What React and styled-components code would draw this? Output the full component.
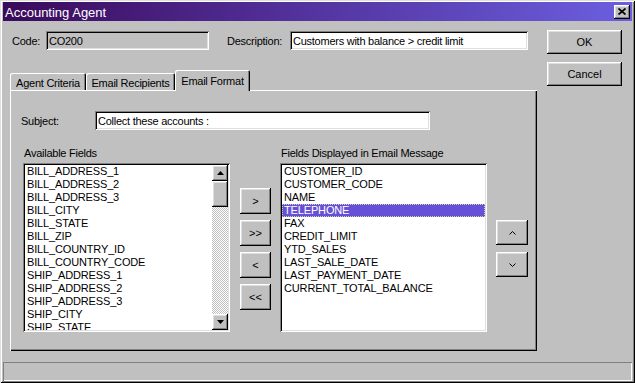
import React from "react";
import styled, { createGlobalStyle, css } from "styled-components";

const FONT = `"Liberation Sans", Arial, sans-serif`;

const Global = createGlobalStyle`
  html, body { margin: 0; padding: 0; background: #c0c0c0; }
  body { font-family: ${FONT}; font-size: 11px; color: #000; letter-spacing: -0.25px; }
  * { box-sizing: border-box; }
`;

const raised = css`
  box-shadow: inset -1px -1px #000, inset 1px 1px #fff, inset -2px -2px #808080,
    inset 2px 2px #dfdfdf;
`;
const sunken = css`
  box-shadow: inset 1px 1px #808080, inset -1px -1px #fff, inset 2px 2px #000,
    inset -2px -2px #dfdfdf;
`;

const Window = styled.div`
  width: 635px;
  height: 383px;
  background: #c0c0c0;
  display: flex;
  flex-direction: column;
  padding: 2px 3px;
  box-shadow: inset 1px 1px #dfdfdf, inset -1px -1px #000, inset 2px 2px #fff,
    inset -2px -2px #808080;
`;

const TitleBar = styled.div`
  flex: none;
  height: 19px;
  display: flex;
  align-items: center;
  justify-content: space-between;
  padding: 0 2px;
  background: linear-gradient(to right, #3a0a5a 0%, #52309a 45%, #6b5fe0 100%);
  color: #fff;
  font-size: 13px;
  letter-spacing: 0;
`;

const TitleText = styled.span`
  padding-top: 1px;
`;

const CloseButton = styled.div`
  width: 16px;
  height: 14px;
  background: #c0c0c0;
  ${raised};
  display: flex;
  align-items: center;
  justify-content: center;
`;

const Main = styled.div`
  flex: 1;
  display: flex;
  padding-left: 7px;
`;

const LeftCol = styled.div`
  width: 527px;
  display: flex;
  flex-direction: column;
`;

const RightCol = styled.div`
  width: 75px;
  margin-left: 10px;
  padding-top: 9px;
  display: flex;
  flex-direction: column;
  gap: 8px;
`;

const FieldRow = styled.div`
  margin-top: 10px;
  height: 19px;
  display: grid;
  grid-template-columns: 36px 163px 81px 238px;
  align-items: center;
`;

const Label = styled.span`
  padding-left: ${(p) => p.$indent || 0}px;
  white-space: nowrap;
`;

const TextField = styled.div`
  height: 19px;
  ${sunken};
  background: ${(p) => (p.$disabled ? "#c0c0c0" : "#fff")};
  padding: 0 3px;
  display: flex;
  align-items: center;
  white-space: nowrap;
  overflow: hidden;
`;

const PushButton = styled.div`
  width: ${(p) => (p.$w ? `${p.$w}px` : "100%")};
  height: ${(p) => p.$h}px;
  background: #c0c0c0;
  ${raised};
  display: flex;
  align-items: center;
  justify-content: center;
  letter-spacing: 0;
`;

const TabStrip = styled.div`
  margin-top: 20px;
  height: 20px;
  display: flex;
  align-items: flex-end;
  position: relative;
  z-index: 1;
`;

const Tab = styled.div`
  width: ${(p) => p.$w}px;
  height: ${(p) => (p.$active ? 21 : 17)}px;
  margin-bottom: ${(p) => (p.$active ? -1 : 0)}px;
  padding-top: ${(p) => (p.$active ? 5 : 4)}px;
  background: #c0c0c0;
  border-radius: 2px 2px 0 0;
  box-shadow: inset 1px 1px #fff, inset -1px 0 #000, inset -2px 0 #808080;
  text-align: center;
  line-height: 13px;
  white-space: nowrap;
`;

const Panel = styled.div`
  height: 261px;
  background: #c0c0c0;
  box-shadow: inset 1px 1px #fff, inset -1px -1px #000, inset -2px -2px #808080;
  padding: 21px 0 0 11px;
`;

const SubjectRow = styled.div`
  height: 19px;
  display: grid;
  grid-template-columns: 74px 335px;
  align-items: center;
`;

const ListsRow = styled.div`
  margin-top: 17px;
  margin-left: 2px;
  display: flex;
  align-items: flex-start;
`;

const ListColumn = styled.div`
  width: 207px;
  margin-left: ${(p) => p.$gap || 0}px;
  display: flex;
  flex-direction: column;
`;

const ListLabel = styled.div`
  line-height: 13px;
  margin-bottom: 3px;
  padding-left: 1px;
  white-space: nowrap;
`;

const ListBox = styled.div`
  height: 169px;
  background: #fff;
  ${sunken};
  padding: 2px;
  display: flex;
`;

const Items = styled.div`
  flex: 1;
  overflow: hidden;
  letter-spacing: -0.15px;
`;

const Row = styled.div`
  height: 13px;
  line-height: 13px;
  padding-left: 2px;
  white-space: nowrap;
  ${(p) =>
    p.$selected &&
    css`
      background: #6750d8;
      color: #fff;
      outline: 1px dotted #d8d0a0;
      outline-offset: -1px;
    `}
`;

const ScrollBar = styled.div`
  width: 16px;
  display: flex;
  flex-direction: column;
  background: repeating-conic-gradient(#c0c0c0 0 25%, #fff 0 50%) 0 0 / 2px 2px;
`;

const ScrollButton = styled.div`
  width: 16px;
  height: ${(p) => p.$h || 16}px;
  background: #c0c0c0;
  ${raised};
  display: flex;
  align-items: center;
  justify-content: center;
`;

const Track = styled.div`
  flex: 1;
`;

const ButtonStack = styled.div`
  width: ${(p) => p.$w}px;
  margin-left: ${(p) => p.$gap}px;
  margin-top: ${(p) => p.$top}px;
  display: flex;
  flex-direction: column;
  gap: ${(p) => p.$spacing}px;
`;

const StatusBar = styled.div`
  flex: none;
  height: 19px;
  box-shadow: inset 1px 1px #808080, inset -1px -1px #fff;
`;

const available = [
  "BILL_ADDRESS_1",
  "BILL_ADDRESS_2",
  "BILL_ADDRESS_3",
  "BILL_CITY",
  "BILL_STATE",
  "BILL_ZIP",
  "BILL_COUNTRY_ID",
  "BILL_COUNTRY_CODE",
  "SHIP_ADDRESS_1",
  "SHIP_ADDRESS_2",
  "SHIP_ADDRESS_3",
  "SHIP_CITY",
  "SHIP_STATE",
];

const displayed = [
  "CUSTOMER_ID",
  "CUSTOMER_CODE",
  "NAME",
  "TELEPHONE",
  "FAX",
  "CREDIT_LIMIT",
  "YTD_SALES",
  "LAST_SALE_DATE",
  "LAST_PAYMENT_DATE",
  "CURRENT_TOTAL_BALANCE",
];

const CloseIcon = () => (
  <svg width="8" height="7" viewBox="0 0 8 7">
    <path d="M0.5 0.5 L7.5 6.5 M7.5 0.5 L0.5 6.5" stroke="#000" strokeWidth="1.7" />
  </svg>
);

const Triangle = ({ down }) => (
  <svg width="7" height="4" viewBox="0 0 7 4">
    <polygon points={down ? "0,0 7,0 3.5,4" : "0,4 7,4 3.5,0"} fill="#000" />
  </svg>
);

const Chevron = ({ down }) => (
  <svg width="7" height="4" viewBox="0 0 7 4">
    <polyline
      points={down ? "0.5,0.5 3.5,3.5 6.5,0.5" : "0.5,3.5 3.5,0.5 6.5,3.5"}
      fill="none"
      stroke="#000"
      strokeWidth="1"
    />
  </svg>
);

export default function App() {
  return (
    <>
      <Global />
      <Window>
        <TitleBar>
          <TitleText>Accounting Agent</TitleText>
          <CloseButton>
            <CloseIcon />
          </CloseButton>
        </TitleBar>
        <Main>
          <LeftCol>
            <FieldRow>
              <Label $indent={2}>Code:</Label>
              <TextField $disabled>CO200</TextField>
              <Label $indent={18}>Description:</Label>
              <TextField>Customers with balance &gt; credit limit</TextField>
            </FieldRow>
            <TabStrip>
              <Tab $w={76}>Agent Criteria</Tab>
              <Tab $w={89}>Email Recipients</Tab>
              <Tab $w={75} $active>
                Email Format
              </Tab>
            </TabStrip>
            <Panel>
              <SubjectRow>
                <Label>Subject:</Label>
                <TextField>Collect these accounts :</TextField>
              </SubjectRow>
              <ListsRow>
                <ListColumn>
                  <ListLabel>Available Fields</ListLabel>
                  <ListBox>
                    <Items>
                      {available.map((f) => (
                        <Row key={f}>{f}</Row>
                      ))}
                    </Items>
                    <ScrollBar>
                      <ScrollButton>
                        <Triangle />
                      </ScrollButton>
                      <ScrollButton $h={26} />
                      <Track />
                      <ScrollButton>
                        <Triangle down />
                      </ScrollButton>
                    </ScrollBar>
                  </ListBox>
                </ListColumn>
                <ButtonStack $w={31} $gap={10} $top={41} $spacing={6}>
                  <PushButton $h={26}>&gt;</PushButton>
                  <PushButton $h={26}>&gt;&gt;</PushButton>
                  <PushButton $h={26}>&lt;</PushButton>
                  <PushButton $h={26}>&lt;&lt;</PushButton>
                </ButtonStack>
                <ListColumn $gap={9}>
                  <ListLabel>Fields Displayed in Email Message</ListLabel>
                  <ListBox>
                    <Items>
                      {displayed.map((f) => (
                        <Row key={f} $selected={f === "TELEPHONE"}>
                          {f}
                        </Row>
                      ))}
                    </Items>
                  </ListBox>
                </ListColumn>
                <ButtonStack $w={32} $gap={9} $top={73} $spacing={7}>
                  <PushButton $h={25}>
                    <Chevron />
                  </PushButton>
                  <PushButton $h={25}>
                    <Chevron down />
                  </PushButton>
                </ButtonStack>
              </ListsRow>
            </Panel>
          </LeftCol>
          <RightCol>
            <PushButton $h={24}>OK</PushButton>
            <PushButton $h={24}>Cancel</PushButton>
          </RightCol>
        </Main>
        <StatusBar />
      </Window>
    </>
  );
}
